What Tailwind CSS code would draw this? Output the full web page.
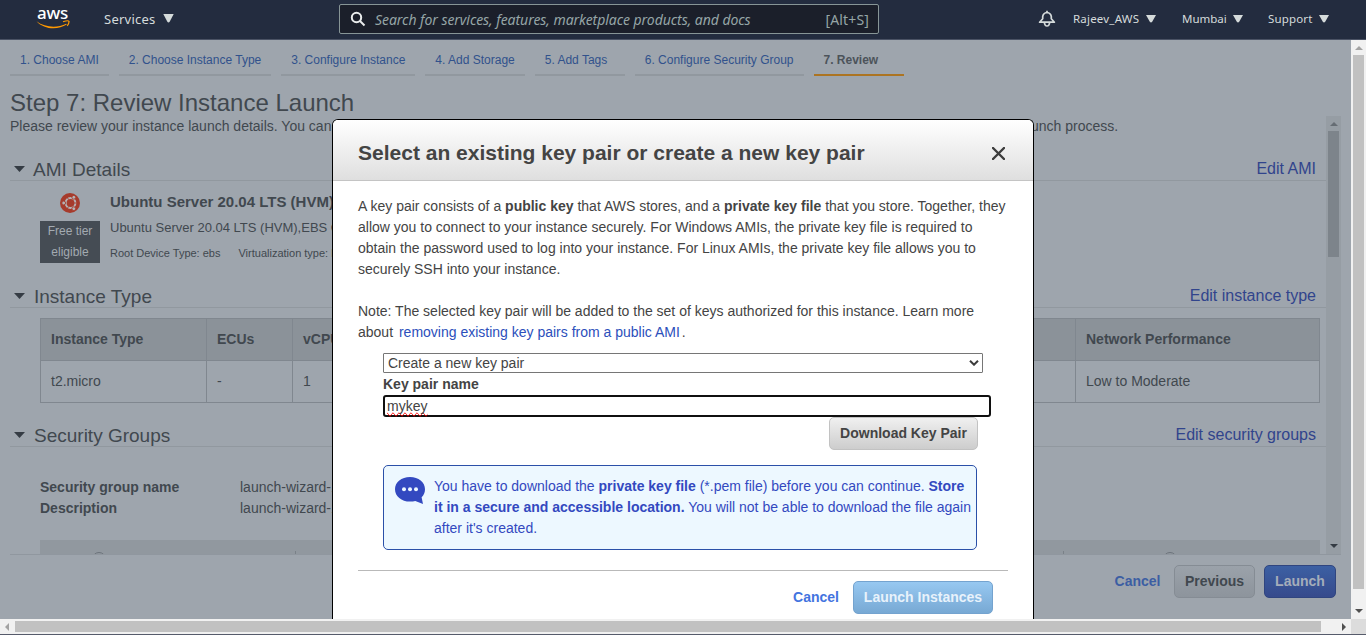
<!DOCTYPE html>
<html lang="en">
<head>
<meta charset="utf-8">
<title>Launch instance wizard</title>
<script src="https://cdn.jsdelivr.net/npm/@tailwindcss/browser@4"></script>
</head>
<body class="w-[1366px] h-[635px] overflow-hidden flex flex-col font-['Liberation_Sans',sans-serif] text-sm leading-[21px] text-[#444] bg-[#f1f1f1]">

<header class="h-10 shrink-0 flex items-center bg-[#232c3f] border-b border-[#4a5264] font-['Noto_Sans',sans-serif] text-[#d5dbdb] whitespace-nowrap">
  <div class="ml-9 w-[34px] h-[22px] relative -top-px">
    <span class="absolute left-[1px] -top-[6px] text-[17px] leading-[22px] font-medium text-white tracking-[-0.2px]">aws</span>
    <svg class="absolute left-0 top-[12px]" width="35" height="10" viewBox="0 0 35 10"><path d="M.5 1.200C9 7.500 21 8.300 30.200 3.700L30.800 4.600C21.500 10.300 8 9.600 .5 1.200z" fill="#f90"/><path d="M27 1.800C30 .8 32.600 .7 33 1.300C33.200 2.600 32.300 4.500 31.200 5.900" fill="none" stroke="#f90" stroke-width="1.200"/></svg>
  </div>
  <div class="ml-[34px] w-[70px] -mt-0.5 flex items-center justify-between text-[13px] leading-5">
    <span class="tracking-[0.25px]">Services</span>
    <svg width="11" height="9" viewBox="0 0 11 9" fill="#d5dbdb"><path d="M.3 0h10.400L6.800 7.600Q5.500 9.300 4.200 7.600z"/></svg>
  </div>
  <div class="ml-[165px] w-[540px] h-[30px] -mt-0.5 flex items-center bg-[#1b1f2a] border border-[#879596] rounded-[2px] text-[#95a5a6] text-[14px]">
    <svg class="ml-[10px]" width="16" height="16" viewBox="0 0 16 16" fill="none" stroke="#eaeded" stroke-width="2"><circle cx="6.500" cy="6.500" r="4.700"/><path d="M10 10l4.500 4.500"/></svg>
    <span class="ml-[9px] mt-[2px] italic tracking-[-0.05px]">Search for services, features, marketplace products, and docs</span>
    <span class="ml-auto mr-[9px] mt-[2px] tracking-[0.15px]">[Alt+S]</span>
  </div>
  <svg class="ml-[159px] -mt-px" width="18" height="18" viewBox="0 0 18 18" fill="none" stroke="#d5dbdb" stroke-width="1.700"><path d="M1.600 12.200L4.700 8.800V6.500Q5.300 3 9 2.500Q12.700 3 13.300 6.500V8.800L16.400 12.200z" stroke-linejoin="round"/><path d="M6.300 12.500Q6.800 16 9 16T11.700 12.500"/><path d="M9 .8v2"/></svg>
  <div class="ml-[17px] w-[83px] -mt-0.5 flex items-center justify-between text-[11.500px]"><span class="tracking-[0.2px]">Rajeev_AWS</span><svg width="10" height="8" viewBox="0 0 10 8" fill="#d5dbdb"><path d="M0 0h10L6.200 6.800Q5 8.300 3.800 6.800z"/></svg></div>
  <div class="ml-[26px] w-[61px] -mt-0.5 flex items-center justify-between text-[11.500px]"><span>Mumbai</span><svg width="10" height="8" viewBox="0 0 10 8" fill="#d5dbdb"><path d="M0 0h10L6.200 6.800Q5 8.300 3.800 6.800z"/></svg></div>
  <div class="ml-[25px] w-[61px] -mt-0.5 flex items-center justify-between text-[11.500px]"><span class="tracking-[0.15px]">Support</span><svg width="10" height="8" viewBox="0 0 10 8" fill="#d5dbdb"><path d="M0 0h10L6.200 6.800Q5 8.300 3.800 6.800z"/></svg></div>
</header>

<div class="h-[579px] shrink-0 flex">
  <main class="relative w-[1351px] h-full overflow-hidden bg-[#9ea5ad] text-[#41484f] flex flex-col pl-[10px] pr-[10px] whitespace-nowrap">
    <nav class="h-9 shrink-0 flex gap-[10px] text-xs leading-[41px] text-[#31528c]">
      <div class="min-w-[90px] px-[10px] h-full border-b-2 border-[#91989f]">1. Choose AMI</div>
      <div class="min-w-[90px] px-[10px] h-full border-b-2 border-[#91989f]">2. Choose Instance Type</div>
      <div class="min-w-[90px] px-[10px] h-full border-b-2 border-[#91989f]">3. Configure Instance</div>
      <div class="min-w-[90px] px-[10px] h-full border-b-2 border-[#91989f]">4. Add Storage</div>
      <div class="min-w-[90px] px-[10px] h-full border-b-2 border-[#91989f]">5. Add Tags</div>
      <div class="min-w-[90px] px-[10px] h-full border-b-2 border-[#91989f]">6. Configure Security Group</div>
      <div class="min-w-[90px] px-[10px] h-full border-b-2 border-[#ac7422] font-bold text-[#4c535a]">7. Review</div>
    </nav>
    <h1 class="h-10 shrink-0 pt-3 text-2xl leading-[30px]">Step 7: Review Instance Launch</h1>
    <div class="h-[439px] shrink-0 flex border-b border-[#90979f]">
      <div class="w-[1316px] h-full overflow-hidden">
        <p>Please review your instance launch details. You can go back to edit changes for each section. Click <b>Launch</b> to assign a key pair to your instance and complete the launch process.</p>

        <section>
          <div class="h-11 flex items-end border-b border-[#91989f]">
            <svg class="ml-1 mb-[8px]" width="11" height="6" fill="#353c44"><path d="M0 0h11L5.500 6z"/></svg>
            <h2 class="ml-2 text-[19px] leading-[21px]">AMI Details</h2>
            <a class="ml-auto mr-[10px] text-base leading-[23px] text-[#31448c]">Edit AMI</a>
          </div>
          <div class="h-[93px] pt-[12px] pl-[30px] flex">
            <div class="w-[60px]">
              <svg class="mx-auto" width="20" height="20" viewBox="0 0 20 20"><circle cx="10" cy="10" r="10" fill="#a63b2c"/><circle cx="10.500" cy="10" r="4.900" fill="none" stroke="#b5b3b5" stroke-width="2"/><g stroke="#a63b2c" stroke-width=".9"><path d="M8.500 6.500L7 3.900M8.500 13.500L7 16.100M14 10h3"/><g fill="#b5b3b5"><circle cx="3.700" cy="10" r="1.900"/><circle cx="13.800" cy="4.300" r="1.900"/><circle cx="13.800" cy="15.700" r="1.900"/></g></g></svg>
              <div class="mt-2 h-[42px] bg-[#454c54] text-center text-xs leading-[21px] text-[#a3aab1]">Free tier<br>eligible</div>
            </div>
            <div class="ml-[10px]">
              <div class="text-[15px] font-bold leading-[18px]">Ubuntu Server 20.04 LTS (HVM),</div>
              <div class="mt-[5px] text-[13px] leading-[24px]">Ubuntu Server 20.04 LTS (HVM),EBS G</div>
              <div class="mt-[3px] flex gap-[18px] text-[11px] leading-[20px]"><span>Root Device Type: ebs</span><span>Virtualization type: hvm</span></div>
            </div>
          </div>
        </section>

        <section>
          <div class="h-[34px] flex items-end border-b border-[#91989f]">
            <svg class="ml-1 mb-[8px]" width="11" height="6" fill="#353c44"><path d="M0 0h11L5.500 6z"/></svg>
            <h2 class="ml-[9px] text-[19px] leading-[21px]">Instance Type</h2>
            <a class="ml-auto mr-[10px] text-base leading-[23px] text-[#31448c]">Edit instance type</a>
          </div>
          <div class="mt-[10px] ml-[30px] w-[1280px] h-[85px] border border-[#80878f]">
            <div class="h-[42px] flex bg-[#8b9299] border-b border-[#80878f] font-bold leading-[41px]">
              <div class="w-[166px] pl-[10px] border-r border-[#80878f]">Instance Type</div><div class="w-[86px] pl-[10px] border-r border-[#80878f]">ECUs</div><div class="w-[783px] pl-[10px] border-r border-[#80878f]">vCPUs</div><div class="pl-[10px]">Network Performance</div>
            </div>
            <div class="h-[41px] flex leading-[41px]">
              <div class="w-[166px] pl-[10px] border-r border-[#80878f]">t2.micro</div><div class="w-[86px] pl-[10px] border-r border-[#80878f]">-</div><div class="w-[783px] pl-[10px] border-r border-[#80878f]">1</div><div class="pl-[10px]">Low to Moderate</div>
            </div>
          </div>
        </section>

        <section>
          <div class="h-11 flex items-end border-b border-[#91989f]">
            <svg class="ml-1 mb-[8px]" width="11" height="6" fill="#353c44"><path d="M0 0h11L5.500 6z"/></svg>
            <h2 class="ml-[9px] text-[19px] leading-[21px]">Security Groups</h2>
            <a class="ml-auto mr-[10px] text-base leading-[23px] text-[#31448c]">Edit security groups</a>
          </div>
          <div class="mt-[30px] ml-[30px] grid grid-cols-[200px_1fr]"><b>Security group name</b><span>launch-wizard-1</span><b>Description</b><span>launch-wizard-1</span></div>
          <div class="mt-[21px] ml-[30px] w-[1280px] h-[14px] overflow-hidden flex bg-[#91989f]">
            <svg class="ml-[52px] mt-[12px]" width="14" height="14" fill="none" stroke="#6b727a"><circle cx="7" cy="7" r="6.500"/></svg>
            <i class="ml-[189px] mt-[11px] w-px bg-[#7a8188]"></i>
            <i class="ml-[767px] mt-[11px] w-px bg-[#7a8188]"></i>
            <svg class="ml-[99px] mt-[12px]" width="14" height="14" fill="none" stroke="#6b727a"><circle cx="7" cy="7" r="6.500"/></svg>
          </div>
        </section>
      </div>
      <div class="w-[15px] h-full flex flex-col items-center justify-between bg-[#969da4]">
        <div class="flex flex-col items-center">
          <svg class="mt-[6px]" width="8" height="4" fill="#666d74"><path d="M0 4h8L4 0z"/></svg>
          <div class="mt-[5px] w-[11px] h-[126px] bg-[#7d848b]"></div>
        </div>
        <svg class="mb-[6px]" width="8" height="4" fill="#353c44"><path d="M0 0h8L4 4z"/></svg>
      </div>
    </div>
    <footer class="pt-[10px] pr-[5px] flex justify-end items-center font-bold">
      <a class="text-[#3c5ea3]">Cancel</a>
      <div class="ml-[13.500px] w-[81px] h-[33px] leading-[31px] text-center rounded-[5px] border border-[#858c94] bg-linear-to-b from-[#9ba2aa] to-[#8d949c]">Previous</div>
      <div class="ml-[9px] w-[72px] h-[33px] leading-[31px] text-center rounded-[5px] border border-[#30457f] bg-linear-to-b from-[#3c60a3] to-[#364a8c] text-[#a5adba]">Launch</div>
    </footer>

    <div class="absolute left-[332px] top-[79px] w-[702px] h-[540px] rounded-t-[6px] border border-b-0 border-black bg-white text-[#444] overflow-hidden" role="dialog">
      <div class="h-[61px] pl-[25px] pr-[28px] flex items-center justify-between border-b border-[#c4c4c4] bg-linear-to-b from-white to-[#dfdfdf]">
        <h3 class="pt-[6px] text-[21px] leading-6 font-bold">Select an existing key pair or create a new key pair</h3>
        <svg class="mt-[7px]" width="13" height="13" viewBox="0 0 13 13" stroke="#3c3c3c" stroke-width="2.400" stroke-linecap="round"><path d="M1 1l11 11M12 1L1 12"/></svg>
      </div>
      <div class="pt-[15px] px-[25px]">
        <p>A key pair consists of a <b>public key</b> that AWS stores, and a <b>private key file</b> that you store. Together, they<br>allow you to connect to your instance securely. For Windows AMIs, the private key file is required to<br>obtain the password used to log into your instance. For Linux AMIs, the private key file allows you to<br>securely SSH into your instance.</p>
        <p class="mt-[21px]">Note: The selected key pair will be added to the set of keys authorized for this instance. Learn more<br>about <a class="ml-[2px] mr-[2px] text-[#2c4fbb]">removing existing key pairs from a public AMI</a>.</p>
        <div class="ml-[25px] mt-[10px]">
          <div class="w-[600px] h-[20px] pl-1 pr-[3px] flex items-center justify-between border border-[#767676] rounded-[1px] leading-[18px]">Create a new key pair
            <svg width="10" height="6" viewBox="0 0 10 6" fill="none" stroke="#3c3c3c" stroke-width="2"><path d="M1 .7l4 4 4-4"/></svg>
          </div>
          <div class="mt-px leading-[21px] font-bold">Key pair name</div>
          <div class="w-[608px] h-[22px] pl-[2px] border-2 border-[#101010] rounded-[3px] leading-[19px]"><span class="[text-decoration:spelling-error]">mykey</span></div>
          <div class="ml-[446px] w-[149px] h-[33px] leading-[31px] text-center font-bold rounded-[5px] border border-[#c2c2c2] bg-linear-to-b from-[#f0f0f0] to-[#cdcdcd]">Download Key Pair</div>
          <div class="mt-[15px] w-[594px] h-[85px] flex border border-[#2b50a8] rounded-[5px] bg-[#edf8ff] text-[#3349c0]">
            <svg class="ml-[11px] mt-[11px]" width="30" height="28" viewBox="0 0 30 28" fill="#3349c0"><path d="M15 0C23.500 0 30 5.200 30 12.200C30 15.500 28.700 18.300 26.600 20.300L28 27L20.300 24Q18 24.600 15 24.600C6.500 24.600 0 19.300 0 12.200C0 5.200 6.500 0 15 0z"/><g fill="#edf8ff"><circle cx="9" cy="12.300" r="2"/><circle cx="15" cy="12.300" r="2"/><circle cx="21" cy="12.300" r="2"/></g></svg>
            <p class="ml-[9px] mt-[10px]">You have to download the <b>private key file</b> (*.pem file) before you can continue. <b>Store<br>it in a secure and accessible location.</b> You will not be able to download the file again<br>after it's created.</p>
          </div>
        </div>
        <div class="mt-5 w-[650px] border-t border-[#b9b9b9] pt-[10px] pr-[15px] flex items-center justify-end font-bold">
          <a class="text-[#4374e0]">Cancel</a>
          <div class="ml-[14px] w-[140px] h-[33px] leading-[31px] text-center rounded-[5px] border border-[#74a3cf] bg-linear-to-b from-[#97c8f1] to-[#78a9d4] text-[#e8f2fb]">Launch Instances</div>
        </div>
      </div>
    </div>
  </main>
  <div class="w-[15px] h-full flex flex-col items-center justify-between bg-[#f1f1f1]">
    <div class="flex flex-col items-center">
      <svg class="mt-[6px]" width="8" height="4" fill="#a3a3a3"><path d="M0 4h8L4 0z"/></svg>
      <div class="mt-[5px] w-[11px] h-[534px] bg-[#c1c1c1]"></div>
    </div>
    <svg class="mb-[6px]" width="8" height="4" fill="#505050"><path d="M0 0h8L4 4z"/></svg>
  </div>
</div>

<div class="h-4 shrink-0 flex border-b border-[#565b6b]">
  <div class="w-[1351px] flex items-center">
    <svg class="ml-[5px]" width="4" height="8" fill="#a3a3a3"><path d="M4 0v8L0 4z"/></svg>
    <div class="ml-[6px] w-[1306px] h-[11px] bg-[#c1c1c1]"></div>
    <svg class="ml-[21px]" width="4" height="8" fill="#505050"><path d="M0 0v8L4 4z"/></svg>
  </div>
  <div class="flex-1 bg-[#dcdcdc]"></div>
</div>
</body>
</html>
